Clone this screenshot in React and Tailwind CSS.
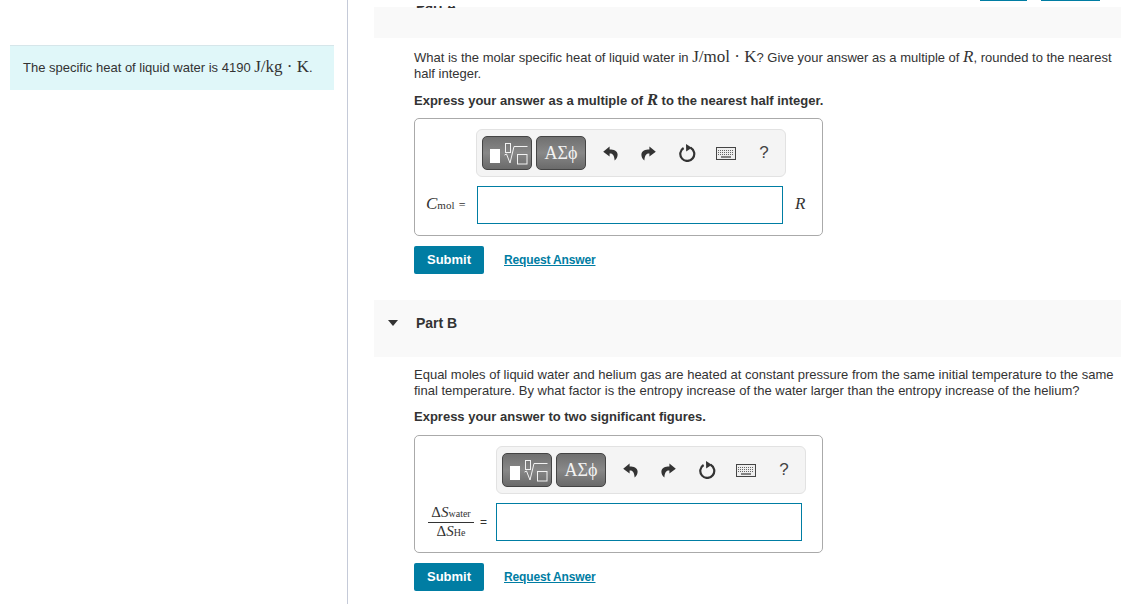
import React from "react"

function Undo({ flip }) {
  return (
    <svg width="15" height="15" viewBox="0 0 15 15" className={flip ? "-scale-x-100" : ""}>
      <path d="M6.6 0.6 L0.2 5.8 L6.6 10.6 L6.6 7.6 C9.6 7.2 11.4 9.4 11.6 14.6 C13.6 13 14.8 10.8 14.6 8.2 C14.2 4.8 10.8 3.6 6.6 3.6 Z" fill="#333" />
    </svg>
  )
}

function Reset() {
  return (
    <svg width="18" height="18" viewBox="0 0 18 18" fill="none">
      <path d="M5.6 4 A7 7 0 1 0 12.6 3.8" stroke="#333" strokeWidth="2.2" />
      <path d="M8 0 L13.8 3.8 L8.2 7.6 Z" fill="#333" />
    </svg>
  )
}

function Keyboard() {
  return (
    <svg width="20" height="13" viewBox="0 0 20 13" fill="none">
      <rect x="0.5" y="0.5" width="19" height="12" fill="#eee" stroke="#444" />
      <path d="M2 3.5h16M2 5.5h16M2 7.5h16" stroke="#666" strokeDasharray="1 1" />
      <path d="M5 10h10" stroke="#555" strokeWidth="1.4" />
    </svg>
  )
}

function Toolbar() {
  return (
    <div className="flex h-12 w-[310px] items-center rounded-md border border-[#e2e2e2] bg-[#f4f4f4] pl-[5px]">
      <div className="flex h-[34px] w-[50px] items-center gap-1 rounded-[5px] border border-[#444] bg-gradient-to-b from-[#707070] via-[#888888] to-[#6a6a6a] pl-[7px]">
        <span className="mt-[6px] h-[14px] w-[10px] bg-white" />
        <svg width="24" height="23" viewBox="0 0 24 23" fill="none" stroke="#f2f2f2">
          <rect x="1.5" y="1.5" width="5" height="9" />
          <path d="M0.5 13 L2.5 12 L6 21 L10 4.5 H23.5" />
          <rect x="13.5" y="12.5" width="9.5" height="9.5" />
        </svg>
      </div>
      <div className="ml-1 flex h-[34px] w-[50px] items-center justify-center rounded-[5px] border border-[#444] bg-gradient-to-b from-[#707070] via-[#888888] to-[#6a6a6a] font-['Liberation_Serif',serif] text-lg text-[#f2f2f2]">
        ΑΣϕ
      </div>
      <div className="ml-[13px] flex w-[22px] justify-center"><Undo /></div>
      <div className="ml-[16.5px] flex w-[22px] justify-center"><Undo flip /></div>
      <div className="ml-[16.5px] flex w-[22px] justify-center"><Reset /></div>
      <div className="ml-[16.5px] flex w-[22px] justify-center"><Keyboard /></div>
      <div className="ml-[16.5px] flex w-[22px] justify-center text-[17px] text-[#444]">?</div>
    </div>
  )
}

function Actions() {
  return (
    <div className="mt-[10px] flex items-center">
      <button className="h-7 w-[70px] rounded-[2px] bg-[#007da3] text-[13px] font-bold text-white">Submit</button>
      <a className="ml-5 text-xs font-bold tracking-[-0.15px] text-[#007da3] underline">Request Answer</a>
    </div>
  )
}

function Var({ children }) {
  return <i className="font-['Liberation_Serif',serif] text-[17px] leading-none">{children}</i>
}

function Rm({ children }) {
  return <span className="font-['Liberation_Serif',serif] text-[17px] leading-none">{children}</span>
}

export default function App() {
  return (
    <div className="flex h-[604px] overflow-hidden bg-white font-['Liberation_Sans',sans-serif] text-[13px] leading-4 text-[#333]">

      {/* left column */}
      <div className="w-[348px] shrink-0 border-r border-[#c5cad8] pt-[45px] pl-[10px]">
        <div className="flex h-[45px] w-[324px] items-center border-t border-[#d6e6ea] bg-[#e0f7f9] pb-[2px] pl-[13px]">
          <span>The specific heat of liquid water is 4190 <Rm>J/kg · K</Rm>.</span>
        </div>
      </div>

      {/* right column */}
      <div className="w-[773px] pl-[26px]">
        <div className="relative pt-[7px]">
          <div className="h-[31px] bg-[#f9f9f9]" />
          {/* the scrolled-off header, only its last pixels are still in view */}
          <div className="absolute left-[42px] top-[6px] h-[2px] w-[60px] overflow-hidden">
            <span className="block mt-[-10px] text-sm font-bold">Part A</span>
          </div>
          <span className="absolute left-[606px] top-0 h-px w-[47px] bg-[#007da3]" />
          <span className="absolute left-[667px] top-0 h-px w-[59px] bg-[#007da3]" />
        </div>

        <div className="pl-10 pt-[10px]">
          <p>What is the molar specific heat of liquid water in <Rm>J/mol · K</Rm>? Give your answer as a multiple of <Var>R</Var>, rounded to the nearest half integer.</p>
          <p className="mt-[9px] font-bold">Express your answer as a multiple of <Var>R</Var> to the nearest half integer.</p>

          <div className="mt-[9px] h-[118px] w-[409px] rounded-[5px] border border-[#aaa] pt-[10px]">
            <div className="ml-[61px]"><Toolbar /></div>
            <div className="mt-[9px] flex items-center">
              <span className="ml-[11px] mb-[2px] w-[51px] font-['Liberation_Serif',serif] text-[17px]"><i>C</i><span className="text-[11px]">mol</span> <span className="text-xs">=</span></span>
              <div className="h-[38px] w-[306px] border border-[#007da3]" />
              <span className="ml-3 mb-[2px]"><Var>R</Var></span>
            </div>
          </div>

          <Actions />
        </div>

        <div className="mt-[26px] flex h-[57px] bg-[#f9f9f9] pt-[13px]">
          <span className="ml-[14px] mt-[7px] h-0 w-0 border-x-[5px] border-t-[6px] border-x-transparent border-t-[#333]" />
          <span className="ml-[18px] text-sm font-bold">Part B</span>
        </div>

        <div className="pl-10 pt-[10px]">
          <p>Equal moles of liquid water and helium gas are heated at constant pressure from the same initial temperature to the same final temperature. By what factor is the entropy increase of the water larger than the entropy increase of the helium?</p>
          <p className="mt-[10px] font-bold">Express your answer to two significant figures.</p>

          <div className="mt-[10px] h-[118px] w-[409px] rounded-[5px] border border-[#aaa] pt-[10px]">
            <div className="ml-[81px]"><Toolbar /></div>
            <div className="mt-[9px] flex items-center">
              <div className="ml-[13px] flex w-[46px] flex-col items-center font-['Liberation_Serif',serif] text-[15px] leading-[17px]">
                <span className="w-full border-b border-[#333] text-center whitespace-nowrap">Δ<i>S</i><span className="text-[10px]">water</span></span>
                <span>Δ<i>S</i><span className="text-[10px]">He</span></span>
              </div>
              <span className="ml-[6px] w-4 text-xs">=</span>
              <div className="h-[38px] w-[306px] border border-[#007da3]" />
            </div>
          </div>

          <Actions />
        </div>
      </div>
    </div>
  )
}
